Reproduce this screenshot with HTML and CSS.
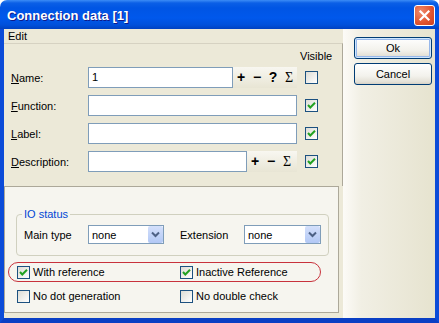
FILE: index.html
```html
<!DOCTYPE html>
<html lang="en">
<head>
    <meta charset="UTF-8">
    <title>Connection data [1]</title>
    <link rel="stylesheet" href="styles.css">
</head>
<body>

    <!-- Dialog window -->
    <div class="window">
        <div class="titlebar">
            <span class="title">Connection data [1]</span>
            <span class="close-btn">
                <svg width="13" height="13" viewBox="0 0 13 13"><path d="M2.5 2.5 L10.5 10.5 M10.5 2.5 L2.5 10.5" stroke="#fff" stroke-width="2.2" stroke-linecap="square"/></svg>
            </span>
        </div>

        <div class="client">
            <div class="main">
                <div class="menubar">Edit</div>

                <!-- Text fields -->
                <div class="fields">
                    <div class="visible-head">Visible</div>

                    <div class="field-row">
                        <span class="field-label"><u>N</u>ame:</span>
                        <div class="field-box">
                            <div class="textbox name-box">1</div>
                            <div class="tools">
                                <span class="tool">+</span>
                                <span class="tool">&minus;</span>
                                <span class="tool">?</span>
                                <span class="tool sigma">&Sigma;</span>
                            </div>
                        </div>
                        <span class="cb"></span>
                    </div>

                    <div class="field-row">
                        <span class="field-label"><u>F</u>unction:</span>
                        <div class="field-box">
                            <div class="textbox"></div>
                        </div>
                        <span class="cb"><svg width="11" height="11" viewBox="0 0 11 11"><path d="M2 5 L4.3 7.5 L9 2.8" fill="none" stroke="#21A121" stroke-width="2"/></svg></span>
                    </div>

                    <div class="field-row">
                        <span class="field-label"><u>L</u>abel:</span>
                        <div class="field-box">
                            <div class="textbox"></div>
                        </div>
                        <span class="cb"><svg width="11" height="11" viewBox="0 0 11 11"><path d="M2 5 L4.3 7.5 L9 2.8" fill="none" stroke="#21A121" stroke-width="2"/></svg></span>
                    </div>

                    <div class="field-row">
                        <span class="field-label"><u>D</u>escription:</span>
                        <div class="field-box">
                            <div class="textbox desc-box"></div>
                            <div class="tools desc-tools">
                                <span class="tool">+</span>
                                <span class="tool">&minus;</span>
                                <span class="tool sigma">&Sigma;</span>
                            </div>
                        </div>
                        <span class="cb"><svg width="11" height="11" viewBox="0 0 11 11"><path d="M2 5 L4.3 7.5 L9 2.8" fill="none" stroke="#21A121" stroke-width="2"/></svg></span>
                    </div>
                </div>

                <!-- Options -->
                <div class="options">
                    <fieldset class="group">
                        <legend>IO status</legend>
                        <div class="io-row">
                            <span class="io-label">Main type</span>
                            <div class="combo main-combo"><span>none</span><span class="combo-btn"><svg width="9" height="7" viewBox="0 0 9 7"><path d="M1 1.5 L4.5 5 L8 1.5" fill="none" stroke="#4D6185" stroke-width="2"/></svg></span></div>
                            <span class="io-label ext-label">Extension</span>
                            <div class="combo ext-combo"><span>none</span><span class="combo-btn"><svg width="9" height="7" viewBox="0 0 9 7"><path d="M1 1.5 L4.5 5 L8 1.5" fill="none" stroke="#4D6185" stroke-width="2"/></svg></span></div>
                        </div>
                    </fieldset>

                    <div class="check-row marked">
                        <span class="check-item"><span class="cb"><svg width="11" height="11" viewBox="0 0 11 11"><path d="M2 5 L4.3 7.5 L9 2.8" fill="none" stroke="#21A121" stroke-width="2"/></svg></span>With reference</span>
                        <span class="check-item"><span class="cb"><svg width="11" height="11" viewBox="0 0 11 11"><path d="M2 5 L4.3 7.5 L9 2.8" fill="none" stroke="#21A121" stroke-width="2"/></svg></span>Inactive Reference</span>
                    </div>
                    <div class="check-row">
                        <span class="check-item"><span class="cb"></span>No dot generation</span>
                        <span class="check-item"><span class="cb"></span>No double check</span>
                    </div>
                </div>
            </div>

            <!-- Buttons -->
            <div class="side">
                <div class="btn default">Ok</div>
                <div class="btn">Cancel</div>
            </div>
        </div>
    </div>

</body>
</html>
```

FILE: styles.css
```css
* {
    box-sizing: border-box;
}

body {
    margin: 0;
    background: #fff;
    font-family: "Liberation Sans", Arial, sans-serif;
    font-size: 11px;
    color: #000;
}

/* Window frame */
.window {
    width: 439px;
    height: 323px;
    display: flex;
    flex-direction: column;
}

.titlebar {
    height: 29px;
    flex: none;
    display: flex;
    align-items: center;
    justify-content: space-between;
    padding: 1px 4px 0 7px;
    border-radius: 7px 7px 0 0;
    background: linear-gradient(180deg, #3c8cf6 0px, #0b5fe6 3px, #0055e4 8px, #0058ec 18px, #0050da 25px, #0041c0 29px);
}

.title {
    color: #fff;
    font-weight: bold;
    font-size: 13px;
    text-shadow: 1px 1px #0f1a89;
}

.close-btn {
    width: 21px;
    height: 21px;
    border: 1px solid #fff;
    border-radius: 3px;
    background: radial-gradient(circle at 30% 30%, #f08a6c, #e0532f 60%, #c9401f);
    display: flex;
    align-items: center;
    justify-content: center;
}

.client {
    flex: 1;
    display: flex;
    border: solid #0b4bd8;
    border-width: 0 4px 5px 4px;
    border-bottom-color: #0a3fc4;
    background: #ece9d8;
}

.main {
    width: 339px;
    display: flex;
    flex-direction: column;
}

.menubar {
    height: 14px;
    line-height: 14px;
    padding-left: 4px;
}

/* Upper panel with text fields */
.fields {
    height: 143px;
    border-top: 1px solid #d6d2c2;
    border-right: 1px solid #aca899;
    padding: 5px 0 0 7px;
}

.visible-head {
    line-height: 14px;
    margin: 0 0 4px 289px;
}

.field-row {
    display: flex;
    align-items: center;
    height: 21px;
    margin-bottom: 7px;
}

.field-label {
    width: 77px;
    flex: none;
}

.field-box {
    width: 209px;
    display: flex;
}

.textbox {
    flex: 1;
    height: 21px;
    border: 1px solid #7f9db9;
    background: #fff;
    padding-left: 3px;
    line-height: 19px;
}

.name-box {
    flex: none;
    width: 145px;
}

.desc-box {
    flex: none;
    width: 159px;
}

.tools {
    flex: 1;
    display: flex;
    height: 21px;
    background: linear-gradient(#f8f7f1, #e8e5d4);
}

.tool {
    width: 16px;
    text-align: center;
    font-weight: bold;
    font-size: 14px;
    line-height: 21px;
}

.tool.sigma {
    font-family: "Liberation Serif", "Times New Roman", serif;
    font-weight: normal;
    font-size: 14px;
}

/* XP style checkbox */
.cb {
    width: 13px;
    height: 13px;
    flex: none;
    border: 1px solid #1c5180;
    background: linear-gradient(135deg, #dcdcd5, #fff);
    display: inline-flex;
    align-items: center;
    justify-content: center;
}

.field-row .cb {
    margin-left: 8px;
}

/* Lower panel */
.options {
    height: 127px;
    margin-right: 4px;
    border: 1px solid #aca899;
    background: #f6f5ef;
    padding-top: 20px;
}

.group {
    margin: 0 9px 0 11px;
    padding: 4px 7px 11px 7px;
    border: 1px solid #d0d0bf;
    border-radius: 4px;
}

.group legend {
    color: #0046d5;
    line-height: 14px;
    padding: 0 2px;
    margin-left: -2px;
}

.io-row {
    display: flex;
    align-items: center;
}

.io-label {
    width: 64px;
}

.ext-label {
    margin-left: 16px;
}

.combo {
    height: 19px;
    border: 1px solid #7f9db9;
    background: #fff;
    display: flex;
    align-items: center;
    justify-content: space-between;
    padding-left: 3px;
}

.main-combo {
    width: 76px;
}

.ext-combo {
    width: 77px;
}

.combo-btn {
    width: 15px;
    height: 17px;
    border-radius: 2px;
    background: linear-gradient(#d4e0fb, #b2c8f5);
    display: flex;
    align-items: center;
    justify-content: center;
}

.check-row {
    display: grid;
    grid-template-columns: 163px auto;
    align-items: center;
    width: 313px;
    height: 20px;
    margin: 4px 0 0 3px;
    padding-left: 8px;
    border: 1px solid transparent;
}

.check-row.marked {
    margin-top: 6px;
    border-color: #c8323c;
    border-radius: 10px;
}

.check-item {
    display: flex;
    align-items: center;
    gap: 3px;
}

/* Right column with buttons */
.side {
    flex: 1;
    background: linear-gradient(to right, #fcfbf7, #f1efe4 20%, #e6e3cf);
    padding: 8px 0 0 11px;
    display: flex;
    flex-direction: column;
    gap: 4px;
}

.btn {
    width: 78px;
    height: 22px;
    border: 1px solid #003c74;
    border-radius: 3px;
    background: linear-gradient(#fff, #f3f2ec 60%, #e3e0d6 90%, #d6d0c5);
    display: flex;
    align-items: center;
    justify-content: center;
}

.btn.default {
    box-shadow: inset 0 0 0 1px #cee7ff, inset 0 0 0 2px #98b8ea;
}
```
